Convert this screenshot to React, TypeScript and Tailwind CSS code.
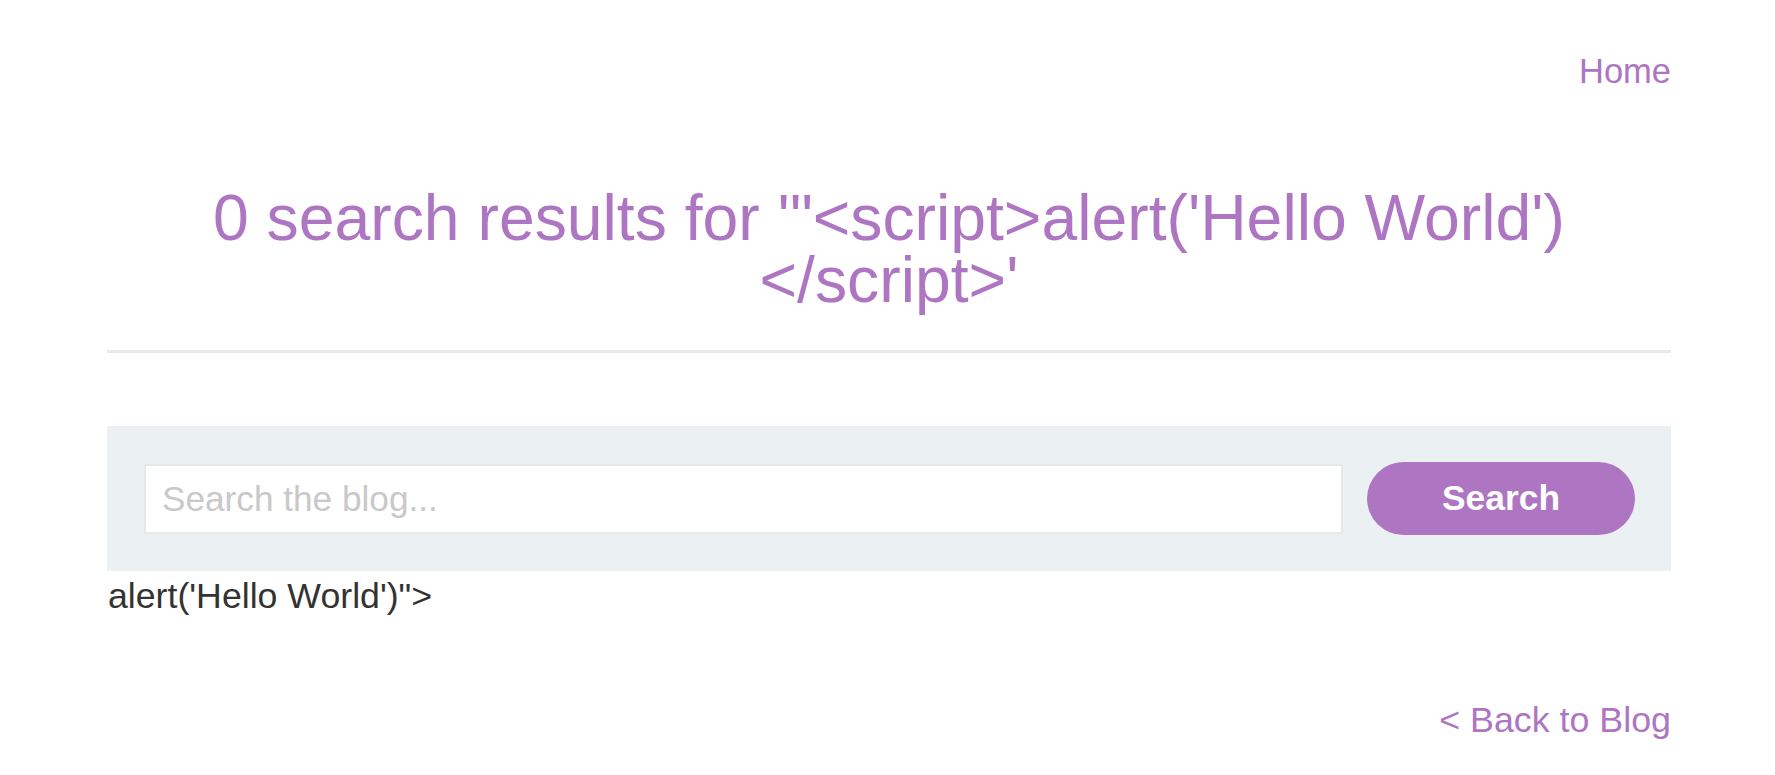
import React from "react";

export default function App() {
  return (
    <div className="min-h-[775px] w-full bg-white font-['Liberation_Sans',Arial,sans-serif]">
      <div className="ml-[107px] w-[1564px]">
        <header className="flex justify-end pt-[51px]">
          <a href="#" className="text-[34.5px] leading-[40px] text-[#ae75c3]">
            Home
          </a>
        </header>

        <h1 className="mt-[96px] text-center text-[64.3px] font-normal leading-[62px] text-[#ae75c3]">
          0 search results for '"&lt;script&gt;alert('Hello World')&lt;/script&gt;'
        </h1>

        <div className="mt-[39px] h-[3px] w-full bg-[#e8e8e8]" />

        <section className="mt-[73px] flex items-center gap-[24px] bg-[#ebf0f2] py-[36px] pl-[37px] pr-[36px]">
          <input
            type="text"
            placeholder="Search the blog..."
            className="h-[70px] flex-1 border-2 border-[#e4e8ea] bg-white px-[16px] text-[35.2px] text-[#333332] outline-none placeholder:text-[#c9c9c9]"
          />
          <button className="h-[73px] w-[268px] rounded-full bg-[#ae75c3] text-[35.4px] font-bold text-white">
            Search
          </button>
        </section>

        <p className="pl-[1px] text-[35.7px] leading-[50px] text-[#333332]">
          alert('Hello World')"&gt;
        </p>

        <div className="mt-[79px] flex justify-end">
          <a href="#" className="text-[35.8px] leading-[40px] text-[#ae75c3]">
            &lt; Back to Blog
          </a>
        </div>
      </div>
    </div>
  );
}
